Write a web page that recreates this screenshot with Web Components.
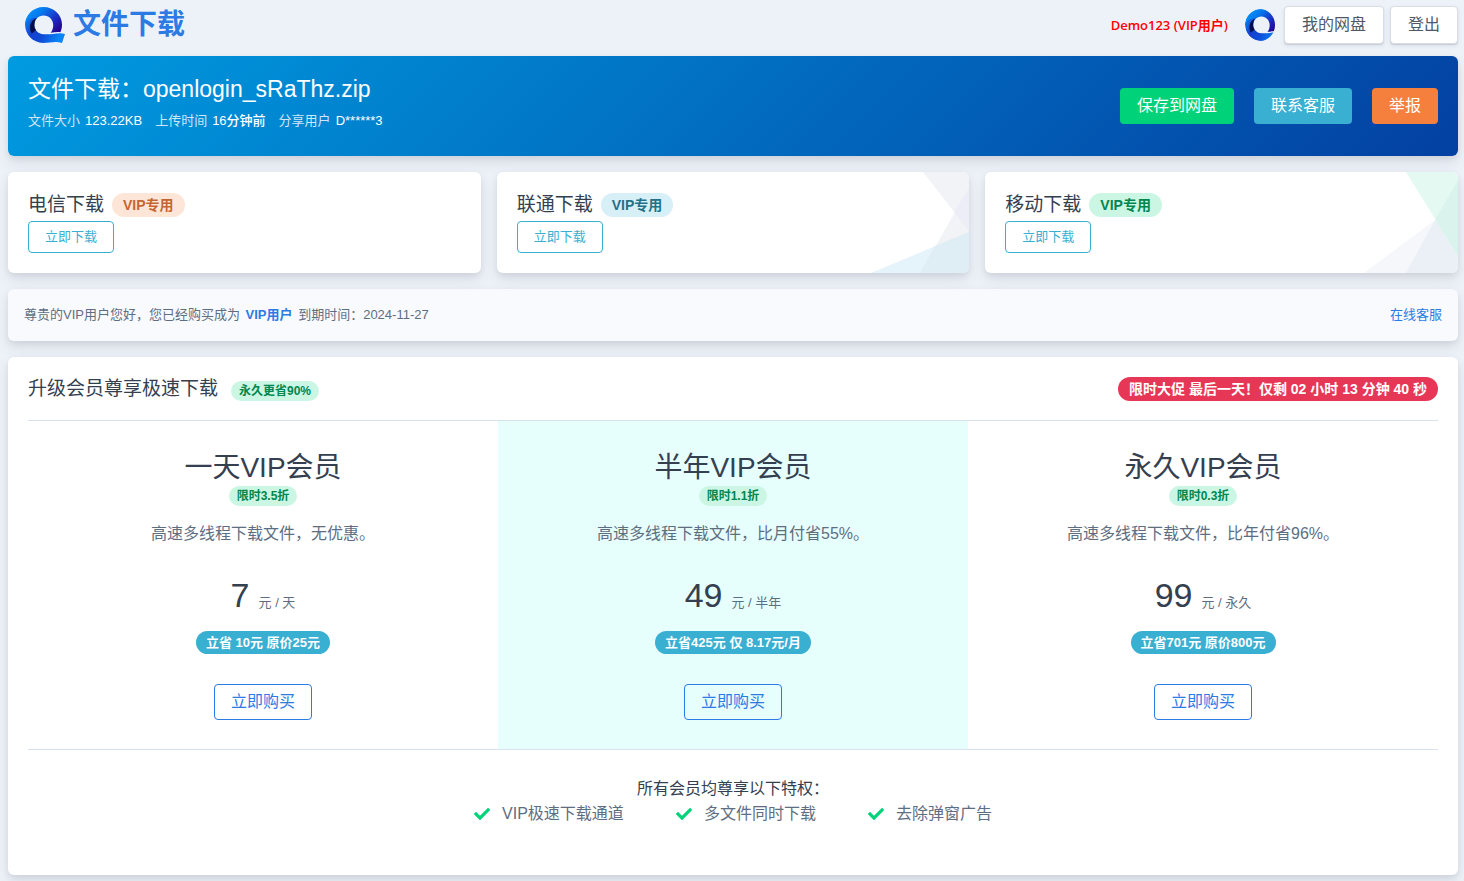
<!DOCTYPE html>
<html lang="zh-CN">
<head>
<meta charset="utf-8">
<meta name="viewport" content="width=device-width, initial-scale=1">
<title>文件下载</title>
<style>
  body {
    margin: 0;
    background: #edf2f9;
    color: #5e6e82;
    font: 16px/24px "Liberation Sans", "Noto Sans CJK SC", sans-serif;
    --shadow: 0 7px 14px rgba(65, 69, 88, .1), 0 3px 6px rgba(0, 0, 0, .07);
    --heading: #344050;
    --primary: #2c7be5;
    --info: #39afd1;
  }
</style>
</head>
<body>
<download-page></download-page>

<template id="brand-logo">
  <style>
    :host { display: block; width: 40px; height: 36px; }
    :host([round]) { width: 30px; height: 32px; border-radius: 50%; overflow: hidden; }
    svg { display: block; width: 40px; height: 36px; }
    :host([round]) svg { width: 35px; height: 32px; }
  </style>
  <svg viewBox="0 0 40 36" preserveAspectRatio="none" aria-hidden="true">
    <defs>
      <linearGradient id="ring" x1="0" y1=".1" x2="1" y2=".8">
        <stop offset="0" stop-color="#009cff"/><stop offset=".35" stop-color="#0678ee"/>
        <stop offset=".7" stop-color="#1b2fc4"/><stop offset="1" stop-color="#230291"/>
      </linearGradient>
      <linearGradient id="tail" x1="0" y1="0" x2="1" y2=".3">
        <stop offset="0" stop-color="#0a86f4"/><stop offset=".3" stop-color="#1640cc"/>
        <stop offset=".6" stop-color="#0f4cd8"/><stop offset="1" stop-color="#0a84f6"/>
      </linearGradient>
    </defs>
    <path fill="url(#ring)" d="M18.500 0C29 0 37 8 37 17.500c0 3-.6 5.500-1.600 7.700-3-.3-6 .1-9.800.5 1.800-1.800 2.600-4.500 2.600-7.700 0-5.300-4.200-9.500-9.500-9.500S9.300 12.700 9.300 18L0 18C0 8 8.300 0 18.500 0z"/>
    <path fill="url(#tail)" d="M0 17C0 28 8 35.500 18 36c7 0 13-2 19 0L40 27c-4-1.400-8-.6-12-.1-3 .4-6 .5-9.500.3C13 27 9.300 23 9.300 17.800c0-3 .9-5 2.600-7C7 11 1 13 0 17z"/>
    <path fill="#070d4a" d="M11.500 11C7 12.500 4.500 17 5.200 22.500c.3 1.700.8 2.800 1.600 4L11 23c-1.200-1.500-1.700-3.200-1.700-5.200 0-2.600.7-4.800 2.200-6.800z"/>
  </svg>
</template>

<template id="app-button">
  <style>
    :host { display: block; }
    button {
      display: block; box-sizing: border-box; height: 36px; padding: 0 16px;
      border: 1px solid transparent; border-radius: 4px; background: none;
      font: inherit; font-size: 16px; line-height: 32px; white-space: nowrap; color: #fff; cursor: pointer;
    }
    :host([kind=plain]) button { height: 38px; padding: 0 17px; border-color: #d9dde5; background: #fff; color: #4d5969; box-shadow: 0 2px 5px rgba(43, 45, 80, .08), 0 1px 1px rgba(0, 0, 0, .12); }
    :host([kind=success]) button { background: #00d27a; }
    :host([kind=info]) button { background: var(--info); }
    :host([kind=warning]) button { background: #f5803e; }
    :host([kind=outline]) button { border-color: var(--primary); color: var(--primary); }
    :host([kind=small]) button { height: 32px; font-size: 13px; line-height: 28px; border-color: var(--info); color: var(--info); }
  </style>
  <button type="button"><slot></slot></button>
</template>

<template id="pill-badge">
  <style>
    :host {
      display: inline-block; box-sizing: border-box; padding: 0 8px; border-radius: 16px;
      font-size: 12px; line-height: 20px; font-weight: 700; white-space: nowrap;
      background: #ccf6e4; color: #00864e;
    }
    :host([size=medium]) { padding: 0 10px; font-size: 13px; line-height: 23px; }
    :host([size=large]) { padding: 0 11px; font-size: 14px; line-height: 24px; }
    :host([tone=warning]) { background: #fde6d8; color: #c46632; }
    :host([tone=info]) { background: #d7eff6; color: #257187; }
    :host([tone=solid]) { background: var(--info); color: #fff; }
    :host([tone=danger]) { background: #e63757; color: #fff; }
  </style>
  <slot></slot>
</template>

<template id="app-header">
  <style>
    :host { display: flex; align-items: center; height: 50px; padding-left: 17px; }
    a { display: flex; align-items: center; gap: 8px; margin-right: auto; color: var(--primary); text-decoration: none; font-size: 28px; line-height: 36px; font-weight: 700; }
    .user { margin-right: 17px; color: #f00; font: 600 13px/20px "Open Sans", "Noto Sans CJK SC", sans-serif; }
    .actions { display: flex; gap: 6px; margin-left: 9px; }
  </style>
  <a href="#"><brand-logo></brand-logo><span>文件下载</span></a>
  <span class="user">Demo123 (VIP用户)</span>
  <brand-logo round></brand-logo>
  <div class="actions">
    <app-button kind="plain">我的网盘</app-button>
    <app-button kind="plain">登出</app-button>
  </div>
</template>

<template id="file-banner">
  <style>
    :host {
      display: flex; align-items: center; justify-content: space-between; padding: 16px 20px;
      border-radius: 6px; color: #fff; background: linear-gradient(-45deg, #0340a2, #009be0); box-shadow: var(--shadow);
    }
    h1 { margin: 0; font-size: 23px; line-height: 34px; font-weight: 400; }
    dl { display: flex; gap: 13px; margin: 0 0 4px; font-size: 13px; line-height: 30px; }
    dl div { display: flex; gap: 5px; }
    dt { color: #d0e6f5; }
    dd { margin: 0; font-weight: 500; }
    .actions { display: flex; gap: 20px; }
  </style>
  <div>
    <h1>文件下载：openlogin_sRaThz.zip</h1>
    <dl>
      <div><dt>文件大小</dt><dd>123.22KB</dd></div>
      <div><dt>上传时间</dt><dd>16分钟前</dd></div>
      <div><dt>分享用户</dt><dd>D******3</dd></div>
    </dl>
  </div>
  <div class="actions">
    <app-button kind="success">保存到网盘</app-button>
    <app-button kind="info">联系客服</app-button>
    <app-button kind="warning">举报</app-button>
  </div>
</template>

<template id="download-card">
  <style>
    :host { display: block; position: relative; overflow: hidden; padding: 16px 20px 20px; border-radius: 6px; background: #fff; box-shadow: var(--shadow); }
    .art { position: absolute; inset: 0 0 0 auto; }
    .head { display: flex; align-items: center; gap: 8px; height: 33px; }
    h2 { margin: 0; font-size: 19px; line-height: 30px; font-weight: 400; color: var(--heading); }
    .content { position: relative; display: flex; flex-direction: column; align-items: flex-start; }
  </style>
  <div class="art"><slot name="art"></slot></div>
  <div class="content">
    <div class="head"><h2><slot></slot></h2><slot name="badge"></slot></div>
    <app-button kind="small">立即下载</app-button>
  </div>
</template>

<template id="notice-bar">
  <style>
    :host { display: flex; justify-content: space-between; padding: 14px 16px; border-radius: 6px; background: #f9fafd; box-shadow: var(--shadow); font-size: 13px; line-height: 24px; }
    strong { margin: 0 2px; color: var(--primary); }
    a { color: var(--primary); text-decoration: none; }
  </style>
  <span>尊贵的VIP用户您好，您已经购买成为 <strong>VIP用户</strong> 到期时间：2024-11-27</span>
  <a href="#">在线客服</a>
</template>

<template id="plan-tier">
  <style>
    :host { display: flex; flex-direction: column; align-items: center; padding: 28px 16px 29px; text-align: center; }
    :host([featured]) { background: #e6fffd; }
    h3 { margin: 0; font-size: 28px; line-height: 37px; font-weight: 400; color: var(--heading); }
    p { margin: 16px 0 28px; }
    .price { display: flex; align-items: baseline; gap: 9px; height: 42px; margin-bottom: 15px; line-height: 42px; font-size: 13px; }
    .price b { font-size: 34px; font-weight: 400; color: var(--heading); }
    app-button { margin-top: 30px; }
  </style>
  <h3><slot name="name"></slot></h3>
  <pill-badge><slot name="discount"></slot></pill-badge>
  <p><slot name="text"></slot></p>
  <div class="price"><b><slot name="price"></slot></b><span><slot name="unit"></slot></span></div>
  <pill-badge tone="solid" size="medium"><slot name="saving"></slot></pill-badge>
  <app-button kind="outline">立即购买</app-button>
</template>

<template id="perk-item">
  <style>
    :host { display: flex; align-items: center; gap: 12px; }
    svg { width: 16px; height: 16px; fill: #00d27a; }
  </style>
  <svg viewBox="0 0 512 512" aria-hidden="true"><path d="M173.898 439.404l-166.400-166.400c-9.997-9.997-9.997-26.206 0-36.204l36.203-36.204c9.997-9.998 26.207-9.998 36.204 0L192 312.690 432.095 72.596c9.997-9.997 26.207-9.997 36.204 0l36.203 36.204c9.997 9.997 9.997 26.206 0 36.204l-294.400 294.401c-9.998 9.997-26.207 9.997-36.204-.001z"/></svg>
  <span><slot></slot></span>
</template>

<template id="plan-panel">
  <style>
    :host { display: block; padding: 0 20px; border-radius: 6px; background: #fff; box-shadow: var(--shadow); }
    header { display: flex; align-items: center; justify-content: space-between; height: 63px; }
    .title { display: flex; align-items: baseline; gap: 13px; }
    h2 { margin: 0; font-size: 19px; line-height: 30px; font-weight: 400; color: var(--heading); }
    .tiers { display: grid; grid-template-columns: repeat(3, 1fr); border: solid #d8e2ef; border-width: 1px 0; }
    footer { display: flex; flex-direction: column; align-items: center; padding: 27px 0 48px; }
    footer > p { margin: 0; color: var(--heading); }
    .perks { display: flex; gap: 52px; line-height: 26px; }
  </style>
  <header>
    <div class="title"><h2>升级会员尊享极速下载</h2><pill-badge>永久更省90%</pill-badge></div>
    <pill-badge tone="danger" size="large">限时大促 最后一天！仅剩 02 小时 13 分钟 40 秒</pill-badge>
  </header>
  <div class="tiers">
    <plan-tier>
      <span slot="name">一天VIP会员</span><span slot="discount">限时3.5折</span>
      <span slot="text">高速多线程下载文件，无优惠。</span>
      <span slot="price">7</span><span slot="unit">元 / 天</span>
      <span slot="saving">立省 10元 原价25元</span>
    </plan-tier>
    <plan-tier featured>
      <span slot="name">半年VIP会员</span><span slot="discount">限时1.1折</span>
      <span slot="text">高速多线程下载文件，比月付省55%。</span>
      <span slot="price">49</span><span slot="unit">元 / 半年</span>
      <span slot="saving">立省425元 仅 8.17元/月</span>
    </plan-tier>
    <plan-tier>
      <span slot="name">永久VIP会员</span><span slot="discount">限时0.3折</span>
      <span slot="text">高速多线程下载文件，比年付省96%。</span>
      <span slot="price">99</span><span slot="unit">元 / 永久</span>
      <span slot="saving">立省701元 原价800元</span>
    </plan-tier>
  </div>
  <footer>
    <p>所有会员均尊享以下特权：</p>
    <div class="perks">
      <perk-item>VIP极速下载通道</perk-item>
      <perk-item>多文件同时下载</perk-item>
      <perk-item>去除弹窗广告</perk-item>
    </div>
  </footer>
</template>

<template id="download-page">
  <style>
    :host { display: block; padding: 0 6px 6px 8px; }
    main { display: grid; gap: 16px; margin-top: 6px; }
    .cards { display: grid; grid-template-columns: repeat(3, 1fr); gap: 16px; }
    svg { display: block; }
  </style>
  <app-header></app-header>
  <main>
    <file-banner></file-banner>
    <div class="cards">
      <download-card>电信下载<pill-badge slot="badge" tone="warning" size="large">VIP专用</pill-badge></download-card>
      <download-card>联通下载<pill-badge slot="badge" tone="info" size="large">VIP专用</pill-badge>
        <svg slot="art" width="100" height="101" viewBox="0 0 100 101" aria-hidden="true">
          <path fill="#f2f3f7" d="M54 0H100V59z"/><path fill="#f2f3f7" d="M100 16V101H51z"/>
          <path fill="#ecedf6" d="M100 16V59L85 40z"/><path fill="#e5f3fb" d="M2 101L100 60V101z"/>
          <path fill="#dfedf4" d="M51 101L66 74L100 60V101z"/>
        </svg>
      </download-card>
      <download-card>移动下载<pill-badge slot="badge" size="large">VIP专用</pill-badge>
        <svg slot="art" width="100" height="101" viewBox="0 0 100 101" aria-hidden="true">
          <path fill="#f5f7fb" d="M6 101L77 48L60 101z"/><path fill="#e4f9f1" d="M48 0H100V84z"/>
          <path fill="#ebeff6" d="M77 48L100 84V101H48z"/><path fill="#daf3ec" d="M100 8V84L77 48z"/>
        </svg>
      </download-card>
    </div>
    <notice-bar></notice-bar>
    <plan-panel></plan-panel>
  </main>
</template>

<script>
  function register(name) {
    customElements.define(name, class extends HTMLElement {
      constructor() {
        super();
        this.attachShadow({ mode: "open" })
          .append(document.getElementById(name).content.cloneNode(true));
      }
    });
  }
  ["brand-logo", "app-button", "pill-badge", "app-header", "file-banner", "download-card",
   "notice-bar", "plan-tier", "perk-item", "plan-panel", "download-page"].forEach(register);
</script>
</body>
</html>
